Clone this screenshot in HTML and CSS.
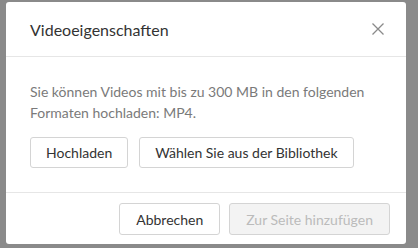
FILE: index.html
```html
<!DOCTYPE html>
<html lang="de">
<head>
    <meta charset="UTF-8">
    <meta name="viewport" content="width=device-width, initial-scale=1.0">
    <title>Videoeigenschaften</title>
    <link rel="stylesheet" href="styles.css">
</head>
<body>
<div class="dialog">
    <div class="dialog-header">
        <h2 class="dialog-title">Videoeigenschaften</h2>
        <button class="close-btn" type="button" aria-label="Schließen">
            <svg width="12" height="12" viewBox="0 0 12 12">
                <path d="M0.5 0.5 L11.5 11.5 M11.5 0.5 L0.5 11.5" stroke="#8a8a8a" stroke-width="1.3" fill="none"/>
            </svg>
        </button>
    </div>
    <div class="dialog-body">
        <p class="info">Sie können Videos mit bis zu 300 MB in den folgenden Formaten hochladen: MP4.</p>
        <div class="actions">
            <button class="btn" type="button">Hochladen</button>
            <button class="btn" type="button">Wählen Sie aus der Bibliothek</button>
        </div>
    </div>
    <div class="dialog-footer">
        <button class="btn btn-footer" type="button">Abbrechen</button>
        <button class="btn btn-footer btn-disabled" type="button" disabled>Zur Seite hinzufügen</button>
    </div>
</div>
</body>
</html>
```

FILE: styles.css
```css
body {
    margin: 0;
    padding: 2px 0 0 6px;
    background: #8a8a8a;
    font-family: "Lato", "Liberation Sans", sans-serif;
    height: 248px;
    box-sizing: border-box;
    overflow: hidden;
}

.dialog {
    width: 400px;
    background: #ffffff;
    border-radius: 3px;
}

.dialog-header {
    height: 54px;
    display: flex;
    align-items: center;
    justify-content: space-between;
    padding: 0 22px 0 24px;
    border-bottom: 1px solid #e6e6e6;
}

.dialog-title {
    margin: 0;
    font-size: 16px;
    font-weight: normal;
    color: #333333;
}

.close-btn {
    border: none;
    background: none;
    padding: 0;
    display: flex;
    cursor: pointer;
}

.dialog-body {
    padding: 24px;
    border-bottom: 1px solid #e6e6e6;
}

.info {
    margin: 0 0 14px 0;
    font-size: 14px;
    line-height: 21px;
    color: #7a7a7a;
}

.actions {
    display: flex;
    gap: 11px;
}

.btn {
    height: 31px;
    padding: 0 15px;
    border: 1px solid #d4d4d4;
    border-radius: 3px;
    background: #ffffff;
    font-family: inherit;
    font-size: 14px;
    color: #333333;
    cursor: pointer;
}

.dialog-footer {
    display: flex;
    justify-content: flex-end;
    gap: 9px;
    padding: 10px 16px 9px 0;
}

.btn-footer {
    height: 32px;
    padding: 0 16px;
}

.btn-disabled {
    background: #f3f3f3;
    color: #bbbbbb;
    cursor: default;
}
```
